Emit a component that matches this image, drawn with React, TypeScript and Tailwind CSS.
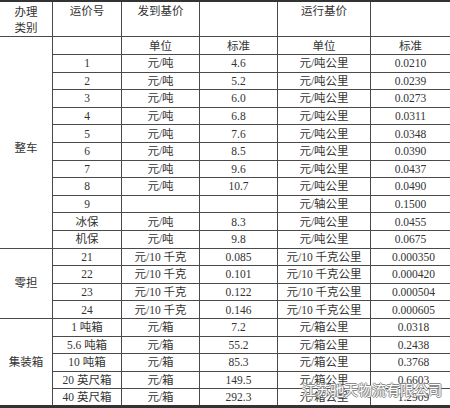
import React from "react"

type Row = [string, string, string, string, string]

const wholeCar: Row[] = [
  ["1", "元/吨", "4.6", "元/吨公里", "0.0210"],
  ["2", "元/吨", "5.2", "元/吨公里", "0.0239"],
  ["3", "元/吨", "6.0", "元/吨公里", "0.0273"],
  ["4", "元/吨", "6.8", "元/吨公里", "0.0311"],
  ["5", "元/吨", "7.6", "元/吨公里", "0.0348"],
  ["6", "元/吨", "8.5", "元/吨公里", "0.0390"],
  ["7", "元/吨", "9.6", "元/吨公里", "0.0437"],
  ["8", "元/吨", "10.7", "元/吨公里", "0.0490"],
  ["9", "", "", "元/轴公里", "0.1500"],
  ["冰保", "元/吨", "8.3", "元/吨公里", "0.0455"],
  ["机保", "元/吨", "9.8", "元/吨公里", "0.0675"],
]

const lessLoad: Row[] = [
  ["21", "元/10 千克", "0.085", "元/10 千克公里", "0.000350"],
  ["22", "元/10 千克", "0.101", "元/10 千克公里", "0.000420"],
  ["23", "元/10 千克", "0.122", "元/10 千克公里", "0.000504"],
  ["24", "元/10 千克", "0.146", "元/10 千克公里", "0.000605"],
]

const container: Row[] = [
  ["1 吨箱", "元/箱", "7.2", "元/箱公里", "0.0318"],
  ["5.6 吨箱", "元/箱", "55.2", "元/箱公里", "0.2438"],
  ["10 吨箱", "元/箱", "85.3", "元/箱公里", "0.3768"],
  ["20 英尺箱", "元/箱", "149.5", "元/箱公里", "0.6603"],
  ["40 英尺箱", "元/箱", "292.3", "元/箱公里", "1.2909"],
]

const td = "border border-[#4a4a4a] text-center align-middle p-0 whitespace-nowrap"

function Group({ label, rows }: { label: string; rows: Row[] }) {
  return (
    <>
      {rows.map((r, i) => (
        <tr key={i} className="h-[17.6px]">
          {i === 0 && (
            <td rowSpan={rows.length} className={td}>
              {label}
            </td>
          )}
          {r.map((c, j) => (
            <td key={j} className={td}>
              {c}
            </td>
          ))}
        </tr>
      ))}
    </>
  )
}

export default function App() {
  return (
    <div
      className="relative w-[450px] h-[408px] overflow-hidden bg-white text-[11.5px] leading-[14px] text-[#333]"
      style={{ fontFamily: '"Liberation Serif", "Noto Sans CJK SC", serif' }}
    >
      <table className="table-fixed border-collapse ml-[-1px] w-[457px] border-t-2 border-t-[#333] border-b-[3px] border-b-[#333]">
        <colgroup>
          <col className="w-[53px]" />
          <col className="w-[69px]" />
          <col className="w-[78px]" />
          <col className="w-[78px]" />
          <col className="w-[93px]" />
          <col className="w-[86px]" />
        </colgroup>
        <tbody>
          <tr className="h-[34px]">
            <td className={td + " !align-top pt-[2px] leading-[16px] whitespace-normal"}>
              办理
              <br />
              类别
            </td>
            <td className={td + " !align-top pt-[2px]"}>运价号</td>
            <td className={td + " !align-top pt-[2px]"}>发到基价</td>
            <td className={td}></td>
            <td className={td + " !align-top pt-[2px]"}>运行基价</td>
            <td className={td}></td>
          </tr>
          <tr className="h-[18px]">
            <td rowSpan={12} className={td}>
              <div className="pt-[12px]">整车</div>
            </td>
            <td className={td}></td>
            <td className={td}>单位</td>
            <td className={td}>标准</td>
            <td className={td}>单位</td>
            <td className={td + " pr-[6px]"}>标准</td>
          </tr>
          {wholeCar.map((r, i) => (
            <tr key={"w" + i} className="h-[17.6px]">
              {r.map((c, j) => (
                <td key={j} className={td + (j === 4 ? " pr-[6px]" : "")}>
                  {c}
                </td>
              ))}
            </tr>
          ))}
          <Group label="零担" rows={lessLoad} />
          <Group label="集装箱" rows={container} />
        </tbody>
      </table>
      <div
        className="absolute left-[302px] top-[382px] text-[14px] leading-[14px] text-white"
        style={{
          fontFamily: '"Noto Sans CJK SC", sans-serif',
          textShadow:
            "1px 0 0 #8a8a8a, -1px 0 0 #8a8a8a, 0 1px 0 #8a8a8a, 0 -1px 0 #8a8a8a",
        }}
      >
        江苏驰天物流有限公司
      </div>
    </div>
  )
}
